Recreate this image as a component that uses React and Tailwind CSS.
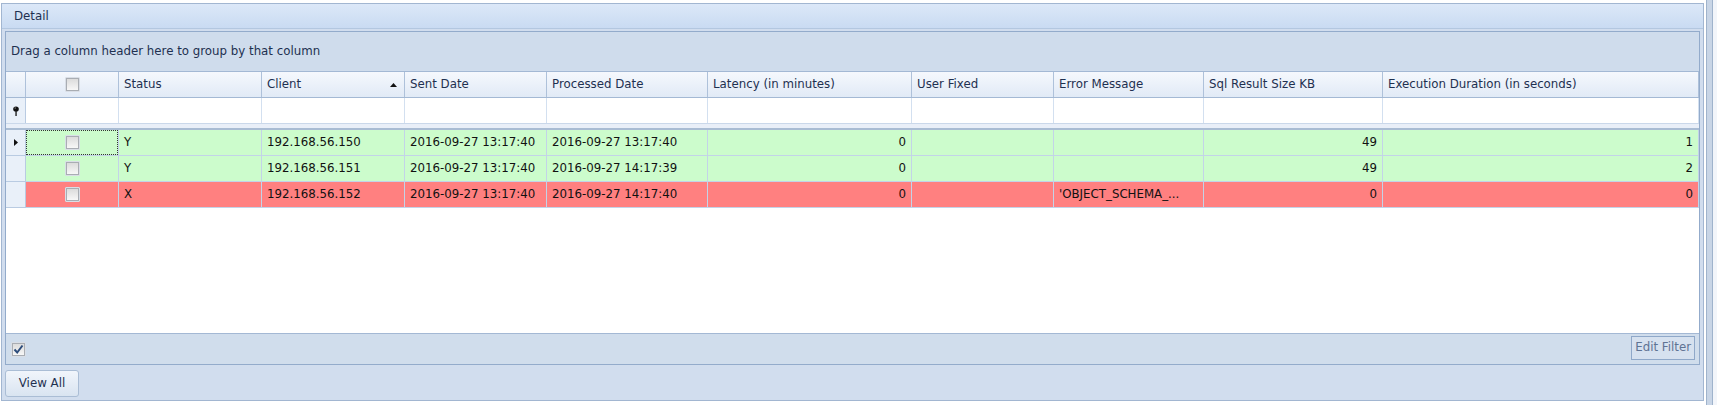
import React from "react";

const cols =
  "grid grid-cols-[20px_93px_143px_143px_142px_161px_204px_142px_150px_179px_1fr]";

const columns = [
  "Status",
  "Client",
  "Sent Date",
  "Processed Date",
  "Latency (in minutes)",
  "User Fixed",
  "Error Message",
  "Sql Result Size KB",
  "Execution Duration (in seconds)",
];

const rows = [
  {
    status: "Y",
    client: "192.168.56.150",
    sent: "2016-09-27 13:17:40",
    processed: "2016-09-27 13:17:40",
    latency: 0,
    fixed: "",
    error: "",
    size: 49,
    duration: 1,
    ok: true,
  },
  {
    status: "Y",
    client: "192.168.56.151",
    sent: "2016-09-27 13:17:40",
    processed: "2016-09-27 14:17:39",
    latency: 0,
    fixed: "",
    error: "",
    size: 49,
    duration: 2,
    ok: true,
  },
  {
    status: "X",
    client: "192.168.56.152",
    sent: "2016-09-27 13:17:40",
    processed: "2016-09-27 14:17:40",
    latency: 0,
    fixed: "",
    error: "'OBJECT_SCHEMA_...",
    size: 0,
    duration: 0,
    ok: false,
  },
];

// little grey checkbox like the devexpress skin
function Check({ checked }) {
  return (
    <div className="w-[15px] h-[15px] border border-[#d9dee6] rounded-[1px] flex items-center justify-center bg-[#f4f6f9]">
      <div className="w-[13px] h-[13px] border border-[#a9adb3] bg-gradient-to-b from-[#dcdcdc] to-[#f7f7f7] flex items-center justify-center">
        {checked && (
          <svg width="11" height="11" viewBox="0 0 11 11">
            <path
              d="M1.5 5.5 L4.2 8.5 L9.5 1.5"
              fill="none"
              stroke="#2d4d7c"
              strokeWidth="2"
            />
          </svg>
        )}
      </div>
    </div>
  );
}

function HeaderCell({ children, sorted }) {
  return (
    <div className="h-[25px] flex items-center justify-between pl-[5px] pr-[7px] border-r border-[#aec1da] text-[#1e3050] whitespace-nowrap overflow-hidden">
      <span>{children}</span>
      {sorted && (
        <svg width="7" height="4" viewBox="0 0 7 4">
          <path d="M0 4 L3.5 0 L7 4 Z" fill="#111" />
        </svg>
      )}
    </div>
  );
}

function Cell({ children, right, bg }) {
  return (
    <div
      className={`h-[26px] flex items-center border-r border-b border-[#c3d3e8] whitespace-nowrap overflow-hidden text-[#111] ${bg} ${
        right ? "justify-end pr-[5px]" : "pl-[5px]"
      }`}
    >
      {children}
    </div>
  );
}

export default function App() {
  return (
    <div className="w-[1717px] h-[405px] bg-white flex font-['DejaVu_Sans',sans-serif] text-[11.8px]">
      {/* Detail panel */}
      <div className="ml-px mt-[3px] w-[1703px] h-[398px] border border-[#a2b6d1] flex flex-col bg-[#d1ddee]">
        <div className="h-[25px] bg-gradient-to-b from-[#dce8f8] to-[#c9dbf2] border-b border-[#b3c7e0] pl-[12px] pt-px flex items-center text-[#1e3050]">
          Detail
        </div>

        <div className="flex-1 px-[3px] pt-[2px] flex flex-col">
          {/* grid */}
          <div className="h-[334px] border border-[#93abcb] flex flex-col bg-white">
            <div className="h-[40px] bg-[#cfdcec] border-b border-[#a3b8d4] pl-[5px] pt-px flex items-center text-[#1e3050]">
              Drag a column header here to group by that column
            </div>

            {/* column headers */}
            <div className={`${cols} bg-gradient-to-b from-[#f5f8fd] to-[#e1eaf6] border-b border-[#a4b9d4]`}>
              <div className="h-[25px] border-r border-[#aec1da]" />
              <div className="h-[25px] border-r border-[#aec1da] flex items-center justify-center">
                <Check />
              </div>
              {columns.map((c) => (
                <HeaderCell key={c} sorted={c === "Client"}>
                  {c}
                </HeaderCell>
              ))}
            </div>

            {/* auto filter row */}
            <div className={`${cols} bg-white`}>
              <div className="h-[25px] bg-[#e9f0f9] border-r border-[#b9cbe2] flex items-center justify-center">
                <svg width="6" height="10" viewBox="0 0 6 10">
                  <ellipse cx="3" cy="3" rx="2.8" ry="2.6" fill="#111" />
                  <rect x="2.4" y="5" width="1.3" height="5" fill="#111" />
                  <rect x="1.6" y="1.4" width="1.2" height="1.3" fill="#888" />
                </svg>
              </div>
              {Array.from({ length: 10 }).map((_, i) => (
                <div key={i} className="h-[25px] border-r border-[#d3e0f0]" />
              ))}
            </div>
            <div className="h-[7px] bg-[#e9eff8] border-t border-[#cad8ea] border-b-2 border-b-[#a9bcd3]" />

            {/* data rows */}
            {rows.map((r, i) => {
              const bg = r.ok ? "bg-[#ccfccc]" : "bg-[#ff8080]";
              return (
                <div key={i} className={cols}>
                  <div className="h-[26px] bg-[#e9f0f9] border-r border-b border-[#b9cbe2] flex items-center justify-center">
                    {i === 0 && (
                      <svg width="4" height="7" viewBox="0 0 4 7">
                        <path d="M0 0 L4 3.5 L0 7 Z" fill="#111" />
                      </svg>
                    )}
                  </div>
                  <div
                    className={`h-[26px] flex items-center justify-center border-r border-b border-[#c3d3e8] ${bg}`}
                  >
                    <div
                      className={`w-full h-full flex items-center justify-center ${
                        i === 0 ? "border border-dotted border-[#333]" : ""
                      }`}
                    >
                      <Check />
                    </div>
                  </div>
                  <Cell bg={bg}>{r.status}</Cell>
                  <Cell bg={bg}>{r.client}</Cell>
                  <Cell bg={bg}>{r.sent}</Cell>
                  <Cell bg={bg}>{r.processed}</Cell>
                  <Cell bg={bg} right>
                    {r.latency}
                  </Cell>
                  <Cell bg={bg}>{r.fixed}</Cell>
                  <Cell bg={bg}>{r.error}</Cell>
                  <Cell bg={bg} right>
                    {r.size}
                  </Cell>
                  <Cell bg={bg} right>
                    {r.duration}
                  </Cell>
                </div>
              );
            })}

            <div className="flex-1 bg-white" />

            {/* filter footer */}
            <div className="h-[31px] bg-[#d0ddec] border-t border-[#a3b8d4] flex items-center justify-between pl-[5px] pr-[4px]">
              <Check checked />
              <button className="h-[24px] px-[3px] border border-[#8fa8c9] bg-[#d6e1ef] text-[#5f7393] mb-[2px]">
                Edit Filter
              </button>
            </div>
          </div>

          <div className="pt-[5px]">
            <button className="w-[74px] h-[27px] rounded-[3px] border border-[#aabdd5] bg-gradient-to-b from-[#f1f5fb] to-[#d9e4f1] text-[#1e3050]">
              View All
            </button>
          </div>
        </div>
      </div>

      {/* splitter strip on the right */}
      <div className="ml-[2px] h-full w-[7px] bg-[#c8d5e6] border-x border-[#9fb3cc]" />
      <div className="flex-1 bg-[#f2f5fa]" />
    </div>
  );
}
